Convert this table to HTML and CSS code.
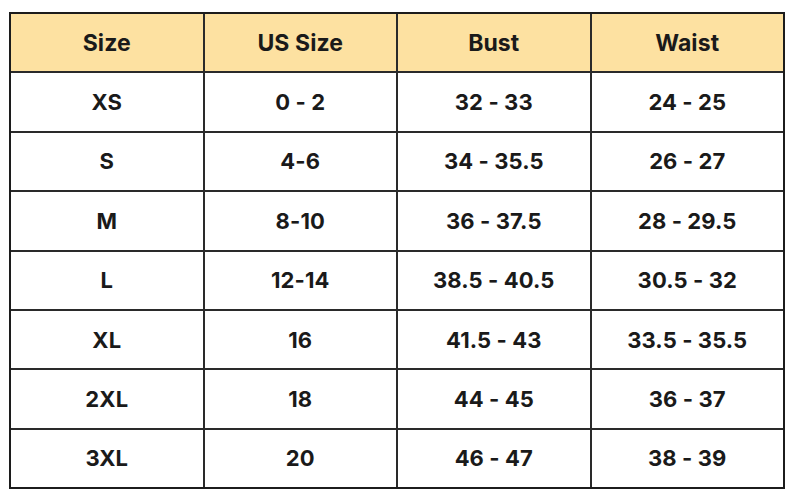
FILE: index.html
```html
<!DOCTYPE html>
<html>
<head>
<meta charset="utf-8">
<link rel="stylesheet" href="styles.css">
</head>
<body>
<div class="chart">
  <div class="cell head">Size</div><div class="cell head">US Size</div><div class="cell head">Bust</div><div class="cell head">Waist</div>
  <div class="cell">XS</div><div class="cell">0 - 2</div><div class="cell">32 - 33</div><div class="cell">24 - 25</div>
  <div class="cell">S</div><div class="cell">4-6</div><div class="cell">34 - 35.5</div><div class="cell">26 - 27</div>
  <div class="cell">M</div><div class="cell">8-10</div><div class="cell">36 - 37.5</div><div class="cell">28 - 29.5</div>
  <div class="cell">L</div><div class="cell">12-14</div><div class="cell">38.5 - 40.5</div><div class="cell">30.5 - 32</div>
  <div class="cell">XL</div><div class="cell">16</div><div class="cell">41.5 - 43</div><div class="cell">33.5 - 35.5</div>
  <div class="cell">2XL</div><div class="cell">18</div><div class="cell">44 - 45</div><div class="cell">36 - 37</div>
  <div class="cell">3XL</div><div class="cell">20</div><div class="cell">46 - 47</div><div class="cell">38 - 39</div>
</div>
</body>
</html>
```
FILE: styles.css
```css
html, body {
  margin: 0;
  padding: 0;
  background: #ffffff;
}
body {
  padding: 12px 0 0 9px;
  font-family: Inter, "Liberation Sans", sans-serif;
}
.chart {
  box-sizing: border-box;
  width: 776px;
  height: 477px;
  border: 2px solid #1c1c1c;
  background: #2a2a2a;
  display: grid;
  grid-template-columns: repeat(4, 1fr);
  grid-template-rows: repeat(8, 1fr);
  gap: 2px;
}
.cell {
  background: #ffffff;
  display: flex;
  align-items: center;
  justify-content: center;
  font-size: 22px;
  font-weight: 700;
  color: #1a1a1a;
  letter-spacing: 0.1px;
}
.cell.head {
  background: #fde1a1;
  font-size: 23px;
}
```
